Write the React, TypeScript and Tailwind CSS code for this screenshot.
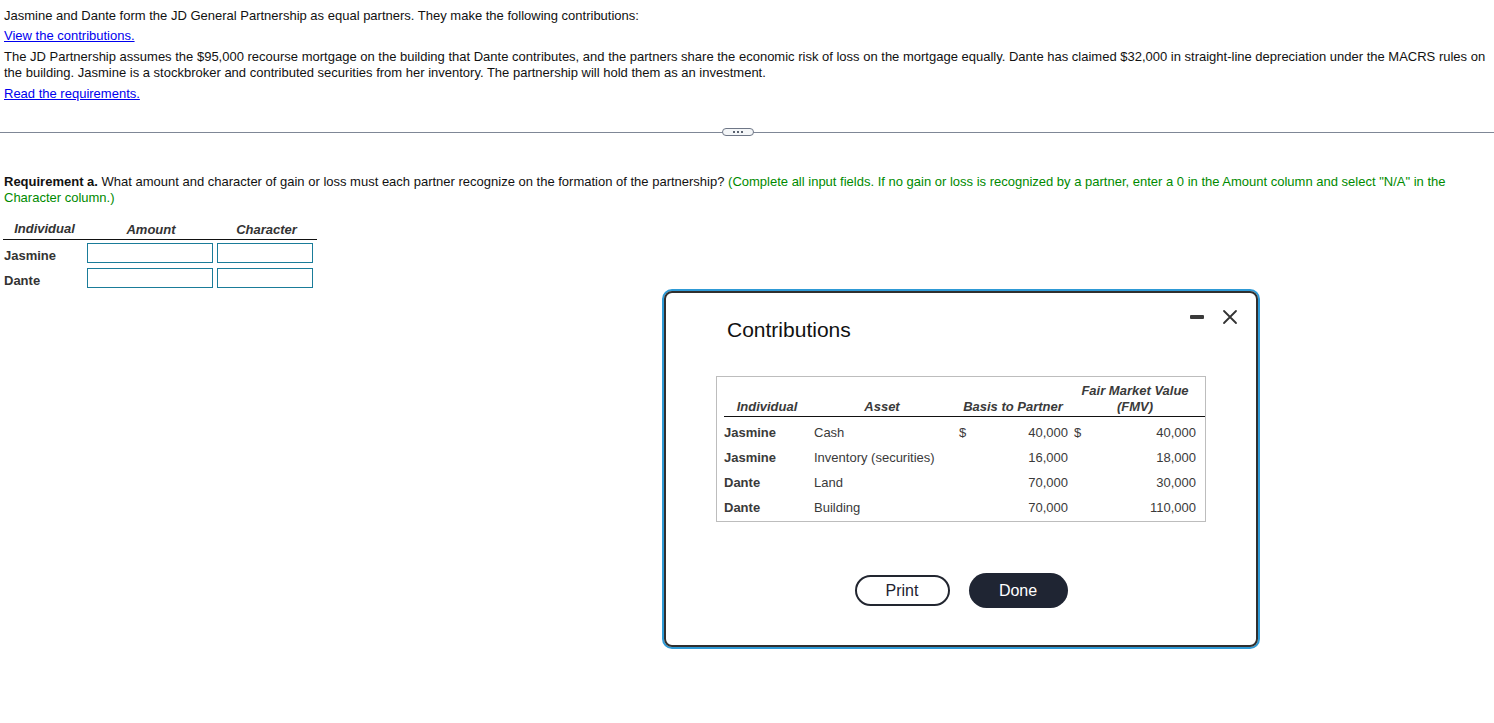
import React from "react";

const font = { fontFamily: '"Liberation Sans", Arial, sans-serif' };

const rows = [
  { who: "Jasmine", asset: "Cash", basisDollar: true, basis: "40,000", fmvDollar: true, fmv: "40,000" },
  { who: "Jasmine", asset: "Inventory (securities)", basisDollar: false, basis: "16,000", fmvDollar: false, fmv: "18,000" },
  { who: "Dante", asset: "Land", basisDollar: false, basis: "70,000", fmvDollar: false, fmv: "30,000" },
  { who: "Dante", asset: "Building", basisDollar: false, basis: "70,000", fmvDollar: false, fmv: "110,000" },
];

function Modal() {
  return (
    <div className="absolute left-[662px] top-[289px] w-[598px] h-[360px] rounded-[10px] border-2 border-[#2e9ad6]">
      <div className="relative h-full w-full rounded-[8px] border-2 border-[#2f2f2f] bg-white">
        <div className="absolute right-[18px] top-[16px] flex items-center gap-[18px]">
          <div className="h-[4px] w-[14px] rounded-[1px] bg-[#3a3a3a]" />
          <svg width="16" height="16" viewBox="0 0 16 16" className="text-[#333]">
            <path d="M2 2 L14 14 M14 2 L2 14" stroke="currentColor" strokeWidth="1.8" strokeLinecap="round" />
          </svg>
        </div>
        <div className="pl-[61px] pt-[24px] text-[21px] leading-[26px] text-[#111]">Contributions</div>
        <div className="ml-[50px] mt-[33px] w-[490px] h-[146px] border border-[#bdbdbd] pl-[7px] pt-[6px]">
          <div className="grid grid-cols-[86px_144px_118px_126px] border-b border-[#111] text-[13px] leading-[16px] font-bold italic text-[#3a3a3a] pb-[1px]">
            <div className="self-end text-center">Individual</div>
            <div className="self-end text-center">Asset</div>
            <div className="self-end text-center">Basis to Partner</div>
            <div className="self-end text-center">
              <div>Fair Market Value</div>
              <div>(FMV)</div>
            </div>
          </div>
          <div className="pt-[3px]">
            {rows.map((r, i) => (
              <div key={i} className="grid grid-cols-[86px_144px_118px_126px] h-[25px] items-center text-[13px] text-[#3a3a3a]">
                <div className="font-bold">{r.who}</div>
                <div className="pl-[4px]">{r.asset}</div>
                <div className="flex justify-between pl-[5px] pr-[4px]">
                  <span>{r.basisDollar ? "$" : ""}</span>
                  <span>{r.basis}</span>
                </div>
                <div className="flex justify-between pl-[2px] pr-[2px]">
                  <span>{r.fmvDollar ? "$" : ""}</span>
                  <span>{r.fmv}</span>
                </div>
              </div>
            ))}
          </div>
        </div>
        <div className="mt-[51px] flex justify-center items-center gap-[19px]">
          <button className="h-[31px] w-[95px] rounded-full border-2 border-[#222630] bg-white text-[16px] text-[#1d2230]">
            Print
          </button>
          <button className="h-[35px] w-[99px] rounded-full bg-[#1f2533] text-[16px] text-white">
            Done
          </button>
        </div>
      </div>
    </div>
  );
}

export default function App() {
  return (
    <div className="relative w-[1494px] h-[723px] bg-white text-[13px] leading-[16px] text-[#111]" style={font}>
      <div className="pl-[4px] pr-[4px] pt-[8px]">
        <p>Jasmine and Dante form the JD General Partnership as equal partners. They make the following contributions:</p>
        <p className="mt-[4px]">
          <a className="text-[#0000ee] underline" href="#">View the contributions.</a>
        </p>
        <p className="mt-[5px]">
          The JD Partnership assumes the $95,000 recourse mortgage on the building that Dante contributes, and the partners share the economic risk of loss on the mortgage equally. Dante has claimed $32,000 in straight-line depreciation under the MACRS rules on the building. Jasmine is a stockbroker and contributed securities from her inventory. The partnership will hold them as an investment.
        </p>
        <p className="mt-[5px]">
          <a className="text-[#0000ee] underline" href="#">Read the requirements.</a>
        </p>
      </div>

      <div className="relative mt-[26px] h-[8px] flex items-center">
        <div className="h-px w-full bg-[#7f8796]" />
        <div className="absolute left-[722px] top-0 flex h-[8px] w-[32px] items-center justify-center gap-[2px] rounded-full border border-[#6f7787] bg-[#f4f6f8]">
          <span className="h-[2px] w-[2px] bg-[#5a6270]" />
          <span className="h-[2px] w-[2px] bg-[#5a6270]" />
          <span className="h-[2px] w-[2px] bg-[#5a6270]" />
        </div>
      </div>

      <div className="pl-[4px] pr-[4px] pt-[38px]">
        <p>
          <span className="font-bold">Requirement a.</span> What amount and character of gain or loss must each partner recognize on the formation of the partnership?{" "}
          <span className="text-[#008a00]">
            (Complete all input fields. If no gain or loss is recognized by a partner, enter a 0 in the Amount column and select "N/A" in the Character column.)
          </span>
        </p>
      </div>

      <div className="ml-[3px] mt-[15px] w-[314px] text-[13px] text-[#333]">
        <div className="grid grid-cols-[83px_130px_101px] border-b border-[#111] pb-[1px] font-bold italic leading-[16px]">
          <div className="text-center">Individual</div>
          <div className="text-center pt-[1px]">Amount</div>
          <div className="text-center pt-[1px]">Character</div>
        </div>
        <div>
          {["Jasmine", "Dante"].map((n) => (
            <div key={n} className="grid grid-cols-[83px_130px_101px] h-[25px] items-start">
              <div className="pl-[1px] pt-[8px] leading-[16px] font-bold">{n}</div>
              <div className="pl-[1px] pt-[3px]">
                <div className="h-[20px] w-[126px] border border-[#1a7c99] bg-white" />
              </div>
              <div className="pl-[1px] pt-[3px]">
                <div className="h-[20px] w-[96px] border border-[#1a7c99] bg-white" />
              </div>
            </div>
          ))}
        </div>
      </div>

      <Modal />
    </div>
  );
}
